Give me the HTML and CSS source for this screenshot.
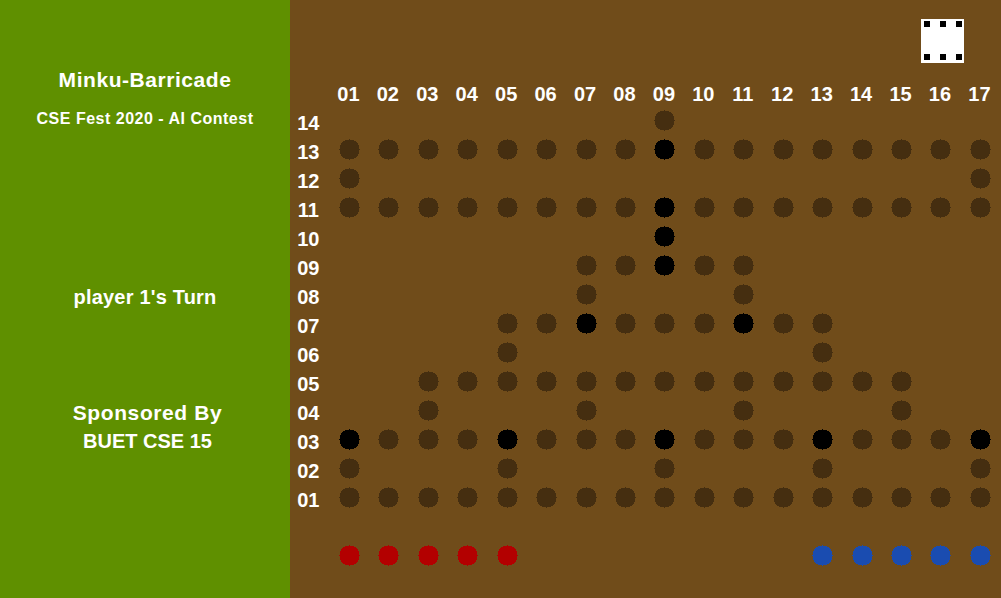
FILE: index.html
```html
<!DOCTYPE html>
<html lang="en">

<head>
    <meta charset="UTF-8">
    <title>Minku-Barricade</title>
    <link rel="stylesheet" href="styles.css">
</head>

<body>
    <div class="sidebar">
        <h1 class="title">Minku-Barricade</h1>
        <p class="subtitle">CSE Fest 2020 - AI Contest</p>
        <p class="turn">player 1's Turn</p>
        <p class="sponsor">Sponsored By</p>
        <p class="sponsor-name">BUET CSE 15</p>
    </div>

    <div class="main">
        <svg class="dice" viewBox="0 0 43 44">
            <rect width="43" height="44" fill="#fff" />
            <rect x="3" y="2" width="6" height="6" />
            <rect x="19" y="2" width="6" height="6" />
            <rect x="35" y="2" width="6" height="6" />
            <rect x="3" y="35" width="6" height="6" />
            <rect x="19" y="35" width="6" height="6" />
            <rect x="35" y="35" width="6" height="6" />
        </svg>

        <div class="board">
            <span></span>
            <b class="col">01</b><b class="col">02</b><b class="col">03</b><b class="col">04</b><b class="col">05</b><b class="col">06</b><b class="col">07</b><b class="col">08</b><b class="col">09</b><b class="col">10</b><b class="col">11</b><b class="col">12</b><b class="col">13</b><b class="col">14</b><b class="col">15</b><b class="col">16</b><b class="col">17</b>

            <b class="row">14</b>
            <i></i><i></i><i></i><i></i><i></i><i></i><i></i><i></i><i class="peg"></i><i></i><i></i><i></i><i></i><i></i><i></i><i></i><i></i>

            <b class="row">13</b>
            <i class="peg"></i><i class="peg"></i><i class="peg"></i><i class="peg"></i><i class="peg"></i><i class="peg"></i><i class="peg"></i><i class="peg"></i><i class="peg safe"></i><i class="peg"></i><i class="peg"></i><i class="peg"></i><i class="peg"></i><i class="peg"></i><i class="peg"></i><i class="peg"></i><i class="peg"></i>

            <b class="row">12</b>
            <i class="peg"></i><i></i><i></i><i></i><i></i><i></i><i></i><i></i><i></i><i></i><i></i><i></i><i></i><i></i><i></i><i></i><i class="peg"></i>

            <b class="row">11</b>
            <i class="peg"></i><i class="peg"></i><i class="peg"></i><i class="peg"></i><i class="peg"></i><i class="peg"></i><i class="peg"></i><i class="peg"></i><i class="peg safe"></i><i class="peg"></i><i class="peg"></i><i class="peg"></i><i class="peg"></i><i class="peg"></i><i class="peg"></i><i class="peg"></i><i class="peg"></i>

            <b class="row">10</b>
            <i></i><i></i><i></i><i></i><i></i><i></i><i></i><i></i><i class="peg safe"></i><i></i><i></i><i></i><i></i><i></i><i></i><i></i><i></i>

            <b class="row">09</b>
            <i></i><i></i><i></i><i></i><i></i><i></i><i class="peg"></i><i class="peg"></i><i class="peg safe"></i><i class="peg"></i><i class="peg"></i><i></i><i></i><i></i><i></i><i></i><i></i>

            <b class="row">08</b>
            <i></i><i></i><i></i><i></i><i></i><i></i><i class="peg"></i><i></i><i></i><i></i><i class="peg"></i><i></i><i></i><i></i><i></i><i></i><i></i>

            <b class="row">07</b>
            <i></i><i></i><i></i><i></i><i class="peg"></i><i class="peg"></i><i class="peg safe"></i><i class="peg"></i><i class="peg"></i><i class="peg"></i><i class="peg safe"></i><i class="peg"></i><i class="peg"></i><i></i><i></i><i></i><i></i>

            <b class="row">06</b>
            <i></i><i></i><i></i><i></i><i class="peg"></i><i></i><i></i><i></i><i></i><i></i><i></i><i></i><i class="peg"></i><i></i><i></i><i></i><i></i>

            <b class="row">05</b>
            <i></i><i></i><i class="peg"></i><i class="peg"></i><i class="peg"></i><i class="peg"></i><i class="peg"></i><i class="peg"></i><i class="peg"></i><i class="peg"></i><i class="peg"></i><i class="peg"></i><i class="peg"></i><i class="peg"></i><i class="peg"></i><i></i><i></i>

            <b class="row">04</b>
            <i></i><i></i><i class="peg"></i><i></i><i></i><i></i><i class="peg"></i><i></i><i></i><i></i><i class="peg"></i><i></i><i></i><i></i><i class="peg"></i><i></i><i></i>

            <b class="row">03</b>
            <i class="peg safe"></i><i class="peg"></i><i class="peg"></i><i class="peg"></i><i class="peg safe"></i><i class="peg"></i><i class="peg"></i><i class="peg"></i><i class="peg safe"></i><i class="peg"></i><i class="peg"></i><i class="peg"></i><i class="peg safe"></i><i class="peg"></i><i class="peg"></i><i class="peg"></i><i class="peg safe"></i>

            <b class="row">02</b>
            <i class="peg"></i><i></i><i></i><i></i><i class="peg"></i><i></i><i></i><i></i><i class="peg"></i><i></i><i></i><i></i><i class="peg"></i><i></i><i></i><i></i><i class="peg"></i>

            <b class="row">01</b>
            <i class="peg"></i><i class="peg"></i><i class="peg"></i><i class="peg"></i><i class="peg"></i><i class="peg"></i><i class="peg"></i><i class="peg"></i><i class="peg"></i><i class="peg"></i><i class="peg"></i><i class="peg"></i><i class="peg"></i><i class="peg"></i><i class="peg"></i><i class="peg"></i><i class="peg"></i>

            <span class="gap"></span>

            <span></span>
            <i class="peg red"></i><i class="peg red"></i><i class="peg red"></i><i class="peg red"></i><i class="peg red"></i><i></i><i></i><i></i><i></i><i></i><i></i><i></i><i class="peg blue"></i><i class="peg blue"></i><i class="peg blue"></i><i class="peg blue"></i><i class="peg blue"></i>
        </div>
    </div>
</body>

</html>
```

FILE: styles.css
```css
body {
    font-family: "Liberation Sans", Arial, sans-serif;
    display: flex;
    height: 100vh;
    margin: 0;
    overflow: hidden;
    color: #fff;
    background-color: #704c1a;
}

.sidebar {
    width: 290px;
    flex-shrink: 0;
    display: flex;
    flex-direction: column;
    align-items: center;
    padding-top: 68px;
    box-sizing: border-box;
    background-color: #5f9000;
    font-weight: bold;
}

.sidebar p,
.sidebar h1 {
    margin: 0;
    line-height: 24px;
    white-space: nowrap;
}

.sidebar .title {
    font-size: 21px;
    letter-spacing: 0.55px;
}

.sidebar .subtitle {
    margin-top: 15px;
    font-size: 16px;
    letter-spacing: 0.5px;
}

.sidebar .turn {
    margin-top: 154px;
    font-size: 20px;
    letter-spacing: 0.2px;
}

.sidebar .sponsor {
    margin-top: 92px;
    margin-left: 5px;
    font-size: 21px;
    letter-spacing: 0.6px;
}

.sidebar .sponsor-name {
    margin-top: 4px;
    margin-left: 5px;
    font-size: 20px;
}

.main {
    flex: 1;
    display: flex;
    flex-direction: column;
    padding-top: 19px;
}

.dice {
    width: 43px;
    height: 44px;
    align-self: flex-end;
    margin-right: 37px;
}

.board {
    display: grid;
    grid-template-columns: 39.7px repeat(17, 39.45px);
    grid-auto-rows: 29px;
    margin-top: 14px;
    font-size: 20px;
}

.col,
.row {
    align-self: center;
    justify-self: center;
    line-height: 22px;
}

.col {
    margin-top: 4px;
    margin-right: 2px;
}

.row {
    margin-top: 4px;
    margin-right: 3px;
}

.peg {
    align-self: center;
    justify-self: center;
    width: 21px;
    height: 21px;
    color: #452e10;
    background: radial-gradient(circle, currentColor 10.03px, transparent 10.03px);
}

.safe {
    color: #000;
}

.red {
    color: #b30000;
}

.blue {
    color: #1a4cb0;
}

.gap {
    grid-column: 1 / -1;
}
```
